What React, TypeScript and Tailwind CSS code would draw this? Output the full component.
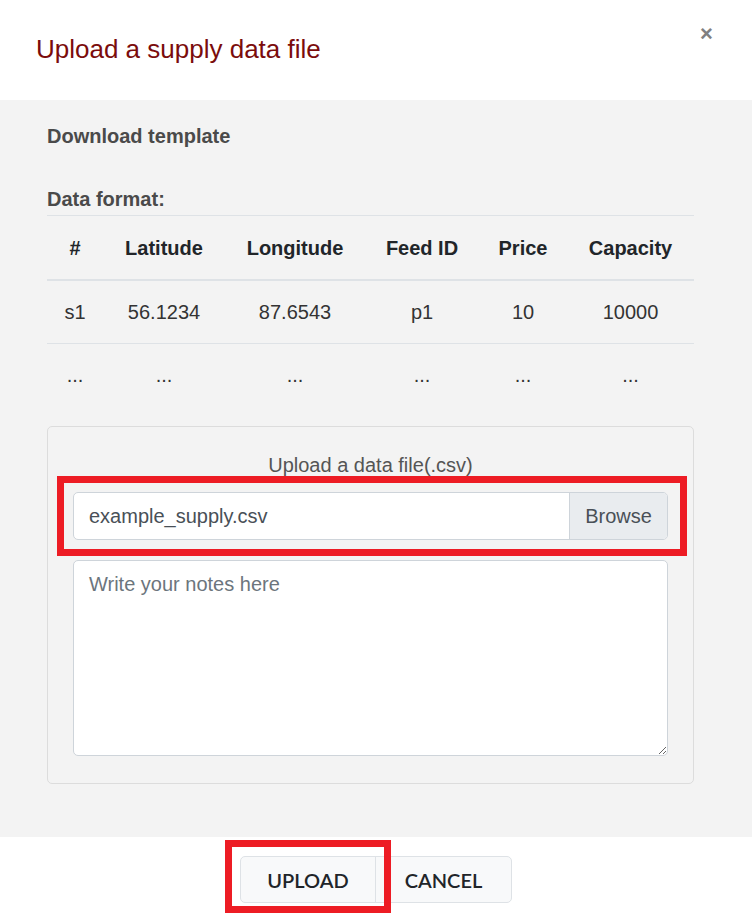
import React from "react";

const columns = [
  { label: "#", w: "w-[56px]" },
  { label: "Latitude", w: "w-[122px]" },
  { label: "Longitude", w: "w-[140px]" },
  { label: "Feed ID", w: "w-[114px]" },
  { label: "Price", w: "w-[88px]" },
  { label: "Capacity", w: "w-[127px]" },
];

const rows = [
  ["s1", "56.1234", "87.6543", "p1", "10", "10000"],
  ["...", "...", "...", "...", "...", "..."],
];

export default function App() {
  return (
    <div className="relative w-[752px] h-[920px] bg-white font-['Liberation_Sans',Arial,sans-serif] overflow-hidden">
      {/* header */}
      <div className="h-[100px] pt-[34px] pl-[36px]">
        <h2 className="text-[26px] leading-[30px] text-[#7b0c0c]">Upload a supply data file</h2>
      </div>
      <button className="absolute top-[19px] left-[700px] text-[22px] font-bold leading-[30px] text-[#808080]">×</button>

      {/* body */}
      <div className="bg-[#f3f3f3] pl-[47px] pr-[58px] pt-[21px] pb-[53px]">
        <p className="text-[20px] leading-[30px] font-bold text-[#4a4a4a] mb-[33px]">Download template</p>
        <p className="text-[20px] leading-[30px] font-bold text-[#4a4a4a] mb-[1px]">Data format:</p>
        <table className="w-full border-collapse table-fixed text-[20px] leading-[30px] mb-[20px]">
          <thead>
            <tr>
              {columns.map((c) => (
                <th
                  key={c.label}
                  className={`${c.w} text-center font-bold text-[#212529] pt-[17px] pb-[16px] border-t border-t-[#dee2e6] border-b-2 border-b-[#dee2e6]`}
                >
                  {c.label}
                </th>
              ))}
            </tr>
          </thead>
          <tbody>
            {rows.map((r, i) => (
              <tr key={i} className={i === 0 ? "border-b border-b-[#dee2e6]" : ""}>
                {r.map((v, j) => (
                  <td key={j} className="text-center text-[#333] py-[16px]">
                    {v}
                  </td>
                ))}
              </tr>
            ))}
          </tbody>
        </table>

        <div className="border border-[#dcdcdc] rounded-[5px] pt-[23px] px-[25px] pb-[27px]">
          <p className="text-center text-[20px] leading-[30px] text-[#555] mb-[12px]">Upload a data file(.csv)</p>
          <div className="flex h-[48px] border border-[#ced4da] rounded-[5px] bg-white overflow-hidden">
            <div className="flex-1 flex items-center pl-[15px] text-[20px] text-[#495057]">example_supply.csv</div>
            <div className="w-[98px] flex items-center justify-center border-l border-l-[#ced4da] bg-[#e9ecef] text-[20px] text-[#495057]">
              Browse
            </div>
          </div>
          <textarea
            placeholder="Write your notes here"
            className="block mt-[20px] w-full h-[196px] bg-white border border-[#ced4da] rounded-[5px] px-[15px] py-[8px] text-[20px] leading-[30px] text-[#495057] placeholder:text-[#6c757d] outline-none"
          />
        </div>
      </div>

      {/* footer */}
      <div className="flex justify-center pt-[19px]">
        <div className="flex h-[47px] border border-[#dee2e6] rounded-[5px] bg-[#f8f9fa] font-['Lato',sans-serif] text-[20px] text-[#212529] font-semibold">
          <button className="w-[135px] flex items-center justify-center border-r border-r-[#dee2e6]">UPLOAD</button>
          <button className="w-[135px] flex items-center justify-center">CANCEL</button>
        </div>
      </div>

      {/* annotations */}
      <div className="absolute left-[57px] top-[476px] w-[630px] h-[80px] border-[7px] border-[#ed1c24] pointer-events-none" />
      <div className="absolute left-[225px] top-[840px] w-[166px] h-[73px] border-[7px] border-[#ed1c24] pointer-events-none" />
    </div>
  );
}
